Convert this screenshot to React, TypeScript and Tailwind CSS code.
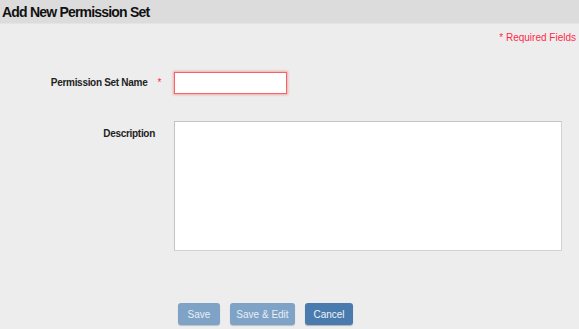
export default function App() {
  return (
    <div className="w-[579px] h-[329px] bg-[#ededed] font-['Liberation_Sans',Arial,sans-serif] overflow-hidden">
      {/* Header */}
      <div className="h-[24px] bg-[#dcdcdc] border-b border-[#e4e4e4] px-[2px] flex items-center">
        <h1 className="text-[14px] font-bold text-[#111] leading-none tracking-[-0.8px]">Add New Permission Set</h1>
      </div>

      {/* Required note */}
      <div className="flex justify-end pr-[3px] pt-[7px]">
        <span className="text-[10px] text-[#ff2a4a] leading-[13px]">* Required Fields</span>
      </div>

      {/* Form rows */}
      <div className="mt-[28px] flex flex-col gap-[27px]">
        <div className="flex items-center">
          <label className="w-[162px] text-right text-[10px] leading-[12px] font-bold text-[#222] pr-[1px] tracking-[-0.3px]">
            Permission Set Name<span className="ml-[10px] text-[#ff2a4a] font-normal">*</span>
          </label>
          <input
            type="text"
            className="ml-[12px] w-[113px] h-[22px] bg-white border border-[#f06666] outline-none shadow-[0_0_2px_1px_rgba(255,90,90,0.45)]"
          />
        </div>
        <div className="flex items-start">
          <label className="w-[162px] text-right text-[10px] leading-[12px] font-bold text-[#222] pr-[7px] pt-[7px] tracking-[-0.3px]">
            Description
          </label>
          <textarea className="ml-[12px] w-[388px] h-[130px] bg-white border border-[#d2d2d2] border-t-[#c4c4c4] border-l-[#c4c4c4] outline-none resize-none" />
        </div>
      </div>

      {/* Buttons */}
      <div className="mt-[52px] pl-[178px] flex gap-[10px]">
        <button className="w-[42px] h-[22px] rounded-[3px] bg-[#7ea3c7] text-[10px] text-[#e8eef5] shadow-[0_1px_1px_rgba(0,0,0,0.2)]">
          Save
        </button>
        <button className="w-[65px] h-[22px] rounded-[3px] bg-[#7ea3c7] text-[10px] text-[#e8eef5] shadow-[0_1px_1px_rgba(0,0,0,0.2)]">
          Save &amp; Edit
        </button>
        <button className="w-[48px] h-[22px] rounded-[3px] bg-[#4a7bae] text-[10px] text-[#eef3f8] shadow-[0_1px_1px_rgba(0,0,0,0.25)]">
          Cancel
        </button>
      </div>
    </div>
  );
}
